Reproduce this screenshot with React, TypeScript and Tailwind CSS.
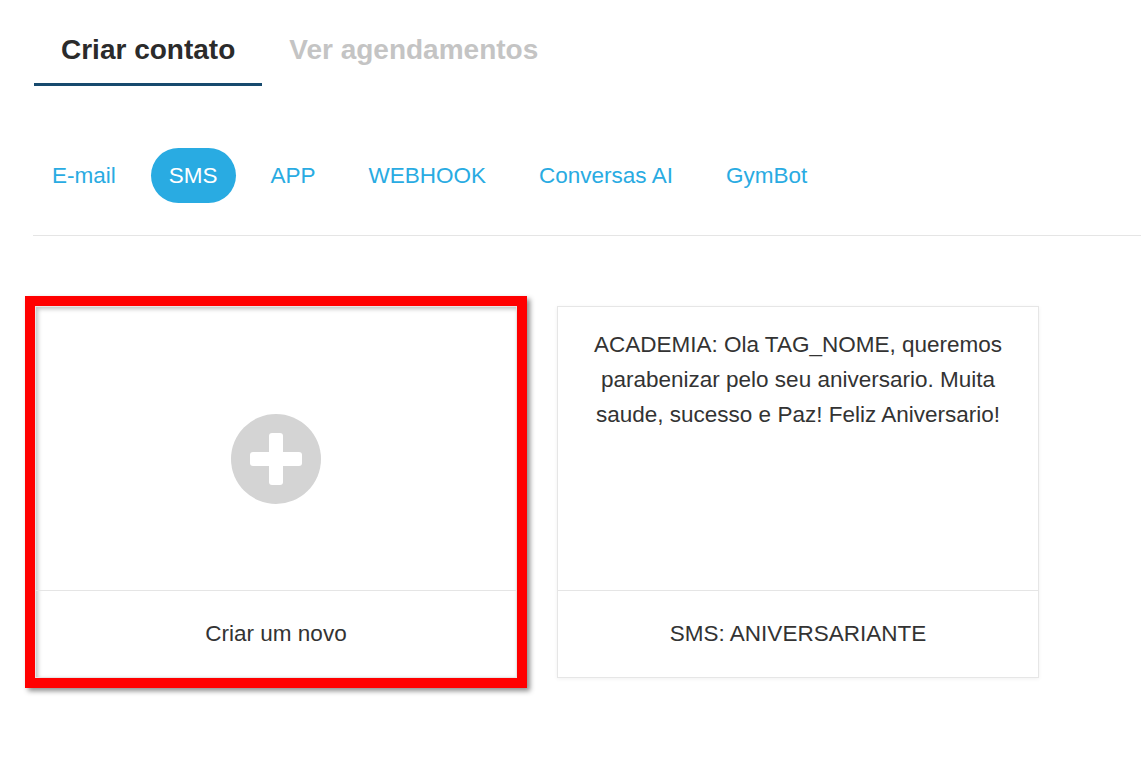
import React, { useState } from 'react';

const channels = ['E-mail', 'SMS', 'APP', 'WEBHOOK', 'Conversas AI', 'GymBot'];

const PlusCircle: React.FC = () => (
  <svg width="90" height="90" viewBox="0 0 90 90">
    <circle cx="45" cy="45" r="45" fill="#d4d4d4" />
    <rect x="38" y="19" width="14" height="52" rx="3" fill="#ffffff" />
    <rect x="19" y="38" width="52" height="14" rx="3" fill="#ffffff" />
  </svg>
);

const App: React.FC = () => {
  const [mainTab, setMainTab] = useState('criar');
  const [channel, setChannel] = useState('SMS');

  return (
    <div className="w-full h-[758px] bg-white overflow-hidden font-['Liberation_Sans',Arial,sans-serif]">
      {/* main tabs */}
      <div className="flex pl-[34px]">
        <button
          onClick={() => setMainTab('criar')}
          className={`px-[27px] pt-[34px] pb-[17px] border-b-[3px] text-[28px] leading-[32px] font-bold ${
            mainTab === 'criar' ? 'border-[#174a6e] text-[#2b2b2b]' : 'border-transparent text-[#c4c4c4]'
          }`}
        >
          Criar contato
        </button>
        <button
          onClick={() => setMainTab('ver')}
          className={`px-[27px] pt-[34px] pb-[17px] border-b-[3px] text-[28px] leading-[32px] font-bold ${
            mainTab === 'ver' ? 'border-[#174a6e] text-[#2b2b2b]' : 'border-transparent text-[#c4c4c4]'
          }`}
        >
          Ver agendamentos
        </button>
      </div>

      {/* channel pills */}
      <div className="flex gap-[17px] pl-[34px] mt-[62px]">
        {channels.map((c) => (
          <button
            key={c}
            onClick={() => setChannel(c)}
            className={`h-[55px] px-[18px] flex items-center rounded-full text-[22.5px] ${
              channel === c ? 'bg-[#29abe2] text-white' : 'text-[#29abe2]'
            }`}
          >
            {c}
          </button>
        ))}
      </div>

      <div className="ml-[33px] mt-[32px] border-t border-[#e5e5e5]" />

      {/* cards */}
      <div className="flex gap-[40px] pl-[35px] mt-[70px]">
        <div className="w-[482px] h-[372px] flex flex-col bg-white border border-[#e6e6e6] shadow-[0_0_0_10px_#ff0000,3px_3px_5px_10px_rgba(0,0,0,0.45),inset_2px_2px_4px_rgba(0,0,0,0.25)]">
          <div className="h-[284px] flex items-center justify-center pt-[21px] border-b border-[#e5e5e5]">
            <PlusCircle />
          </div>
          <div className="flex-1 flex items-center justify-center text-[22.5px] text-[#333333]">
            Criar um novo
          </div>
        </div>

        <div className="w-[482px] h-[372px] flex flex-col bg-white border border-[#e6e6e6] shadow-[0_1px_4px_rgba(0,0,0,0.06)]">
          <div className="h-[284px] px-[28px] pt-[20px] border-b border-[#e5e5e5] text-center text-[22.5px] leading-[35px] text-[#333333]">
            ACADEMIA: Ola TAG_NOME, queremos parabenizar pelo seu aniversario. Muita saude, sucesso e Paz! Feliz Aniversario!
          </div>
          <div className="flex-1 flex items-center justify-center text-[22.5px] text-[#333333]">
            SMS: ANIVERSARIANTE
          </div>
        </div>
      </div>
    </div>
  );
};

export default App;
